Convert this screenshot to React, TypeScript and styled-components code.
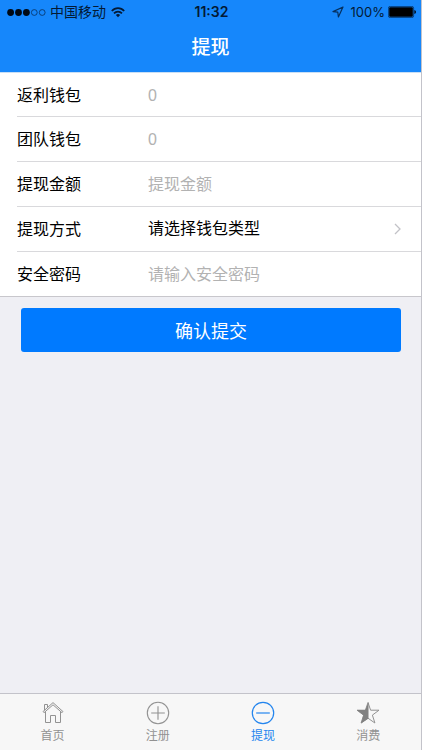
import React, { useState } from "react";
import styled, { createGlobalStyle } from "styled-components";

const GlobalStyle = createGlobalStyle`
  * { box-sizing: border-box; }
  body {
    margin: 0;
    background: #efeff4;
    color: #000;
    font-family: "Liberation Sans", "Noto Sans CJK SC", sans-serif;
  }
  button, input, select { font: inherit; }
`;

const Screen = styled.div`
  display: flex;
  flex-direction: column;
  min-height: 100vh;
  background: #efeff4;
  border-right: 1px solid #c3c3ca;
`;

const Header = styled.header`
  background: #1687fb;
`;

const StatusBar = styled.div`
  display: grid;
  grid-template-columns: 1fr auto 1fr;
  align-items: center;
  height: 24px;
  padding: 0 5px 0 7px;
  font-family: Inter, "Noto Sans CJK SC", sans-serif;
  font-size: 13px;
  line-height: 24px;
  color: #031a35;
`;

const Carrier = styled.div`
  display: flex;
  align-items: center;
  gap: 4px;
`;

const CarrierName = styled.span`
  font-size: 14px;
  margin-right: 1px;
`;

const Clock = styled.time`
  font-size: 14px;
  font-weight: 600;
`;

const Power = styled.div`
  display: flex;
  align-items: center;
  justify-content: flex-end;
  gap: 3px;
`;

const Percent = styled.span`
  margin-left: 4px;
`;

const Title = styled.h1`
  margin: 0;
  font-size: 19px;
  line-height: 48px;
  font-weight: 500;
  text-align: center;
  color: #fff;
`;

const Form = styled.form`
  flex: 1;
`;

const Fields = styled.div`
  background: #fff;
  padding-left: 17px;
  border-top: 1px solid #c9dff5;
  border-bottom: 1px solid #c8c7cc;
`;

const Row = styled.div`
  display: flex;
  align-items: center;
  height: 45px;
  padding-right: 20px;
  border-bottom: 1px solid #d9d9dc;

  &:first-child {
    height: 44px;
  }

  &:last-child {
    height: 44px;
    border-bottom: 0;
  }
`;

const Label = styled.label`
  flex: 0 0 131px;
  padding-top: 2px;
  font-size: 16px;
  line-height: 24px;
`;

const Input = styled.input`
  flex: 1;
  min-width: 0;
  height: 43px;
  padding: 2px 0 0;
  border: 0;
  outline: 0;
  background: transparent;
  font-size: 16px;

  &::placeholder {
    color: #b2b2b2;
    opacity: 1;
  }
`;

const Select = styled.select`
  flex: 1;
  min-width: 0;
  height: 43px;
  padding: 0 0 2px;
  border: 0;
  outline: 0;
  appearance: none;
  background: transparent;
  color: #000;
  font-size: 16px;
`;

const Submit = styled.button`
  display: block;
  width: calc(100% - 41px);
  height: 44px;
  margin: 11px 20px 0 21px;
  padding: 0;
  border: 0;
  border-radius: 3px;
  background: #007aff;
  color: #fff;
  font-size: 18px;
`;

const TabBar = styled.nav`
  display: grid;
  grid-template-columns: repeat(4, 1fr);
  height: 57px;
  background: #f7f7f7;
  border-top: 1px solid #c3c3ca;
`;

const Tab = styled.a<{ $active?: boolean }>`
  display: flex;
  flex-direction: column;
  align-items: center;
  gap: 2px;
  padding-top: 7px;
  color: ${(p) => (p.$active ? "#2385ee" : "#929292")};
  font-size: 12px;
  line-height: 18px;
  text-decoration: none;
`;

const SignalIcon = () => (
  <svg width="39" height="9" viewBox="0 0 39 9" aria-hidden="true">
    {[0, 1, 2, 3, 4].map((i) => (
      <circle
        key={i}
        cx={3.6 + i * 7.9}
        cy="4.5"
        r={i < 3 ? 3.4 : 2.9}
        fill={i < 3 ? "#000914" : "none"}
        stroke={i < 3 ? "none" : "#06305f"}
        strokeWidth="0.8"
      />
    ))}
  </svg>
);

const WifiIcon = () => (
  <svg width="14" height="11" viewBox="0 0 14 11" fill="none" stroke="#031a35" strokeWidth="1.7" aria-hidden="true">
    <path d="M0.8 4C4.2 0.2 9.8 0.2 13.2 4" />
    <path d="M3 6.4C5.2 4 8.8 4 11 6.4" />
    <path d="M7 10.3 4.9 8Q7 6.2 9.1 8Z" fill="#031a35" stroke="none" />
  </svg>
);

const LocationIcon = () => (
  <svg width="12" height="12" viewBox="0 0 12 12" fill="none" stroke="#05305f" strokeWidth="1.2" strokeLinejoin="round" aria-hidden="true">
    <path d="M11 1 1 5.6 5.8 6.2 6.4 11Z" />
  </svg>
);

const BatteryIcon = () => (
  <svg width="28" height="12" viewBox="0 0 28 12" aria-hidden="true">
    <rect x="0.4" y="0.4" width="25.2" height="11.2" rx="1.8" fill="#1687fb" stroke="#05305f" strokeWidth="0.8" />
    <rect x="1.2" y="1.2" width="23.6" height="9.6" rx="1" fill="#000" />
    <path d="M26.4 4Q28 4.6 28 6T26.4 8Z" fill="#000914" />
  </svg>
);

const ChevronIcon = () => (
  <svg width="7" height="12" viewBox="0 0 7 12" fill="none" stroke="#c2c2c7" strokeWidth="1.3" aria-hidden="true">
    <path d="M1 1 6 6 1 11" />
  </svg>
);

const HomeIcon = () => (
  <svg width="24" height="24" viewBox="0 0 24 24" fill="none" stroke="currentColor" strokeWidth="1" strokeLinejoin="miter" aria-hidden="true">
    <path d="M2 10.6 12 1.6 22 10.6 21 11.7 12 3.8 3 11.7Z" />
    <path d="M3.5 9.2V3.5H6.5V6.4" />
    <path d="M4.5 10.6V21.5H9.5V14.5H14.5V21.5H19.5V10.6" />
  </svg>
);

const PlusIcon = () => (
  <svg width="24" height="24" viewBox="0 0 24 24" fill="none" stroke="currentColor" strokeWidth="1.1" aria-hidden="true">
    <circle cx="12" cy="12" r="10.7" />
    <path d="M5.2 12H18.8M12 5.2V18.8" />
  </svg>
);

const MinusIcon = () => (
  <svg width="24" height="24" viewBox="0 0 24 24" fill="none" stroke="currentColor" strokeWidth="1.2" aria-hidden="true">
    <circle cx="12" cy="12" r="10.7" />
    <path d="M5.2 12H18.8" />
  </svg>
);

const HalfStarIcon = () => (
  <svg width="24" height="24" viewBox="0 0 24 24" aria-hidden="true">
    <path d="M12 1.5 14.6 9.2H23L16.4 14.1 18.9 22 12 17.2 5.1 22 7.6 14.1 1 9.2H9.4Z" fill="none" stroke="currentColor" strokeWidth="1" />
    <path d="M12.5 1V17.5L5 22.4 7.4 14.2 0.8 9H9.3Z" fill="#808080" />
  </svg>
);

const tabs = [
  { label: "首页", href: "#home", Icon: HomeIcon },
  { label: "注册", href: "#register", Icon: PlusIcon },
  { label: "提现", href: "#withdraw", Icon: MinusIcon },
  { label: "消费", href: "#spend", Icon: HalfStarIcon },
];

export default function App() {
  const [wallet, setWallet] = useState("");
  return (
    <>
      <GlobalStyle />
      <Screen>
        <Header>
          <StatusBar>
            <Carrier>
              <SignalIcon />
              <CarrierName>中国移动</CarrierName>
              <WifiIcon />
            </Carrier>
            <Clock>11:32</Clock>
            <Power>
              <LocationIcon />
              <Percent>100%</Percent>
              <BatteryIcon />
            </Power>
          </StatusBar>
          <Title>提现</Title>
        </Header>
        <Form onSubmit={(e) => e.preventDefault()}>
          <Fields>
            <Row>
              <Label htmlFor="rebate">返利钱包</Label>
              <Input id="rebate" placeholder="0" readOnly />
            </Row>
            <Row>
              <Label htmlFor="team">团队钱包</Label>
              <Input id="team" placeholder="0" readOnly />
            </Row>
            <Row>
              <Label htmlFor="amount">提现金额</Label>
              <Input id="amount" inputMode="decimal" placeholder="提现金额" />
            </Row>
            <Row>
              <Label htmlFor="wallet">提现方式</Label>
              <Select id="wallet" value={wallet} onChange={(e) => setWallet(e.target.value)}>
                <option value="">请选择钱包类型</option>
                <option value="rebate">返利钱包</option>
                <option value="team">团队钱包</option>
              </Select>
              <ChevronIcon />
            </Row>
            <Row>
              <Label htmlFor="password">安全密码</Label>
              <Input id="password" type="password" placeholder="请输入安全密码" />
            </Row>
          </Fields>
          <Submit type="submit">确认提交</Submit>
        </Form>
        <TabBar>
          {tabs.map(({ label, href, Icon }) => (
            <Tab key={href} href={href} $active={href === "#withdraw"} aria-current={href === "#withdraw" ? "page" : undefined}>
              <Icon />
              {label}
            </Tab>
          ))}
        </TabBar>
      </Screen>
    </>
  );
}
